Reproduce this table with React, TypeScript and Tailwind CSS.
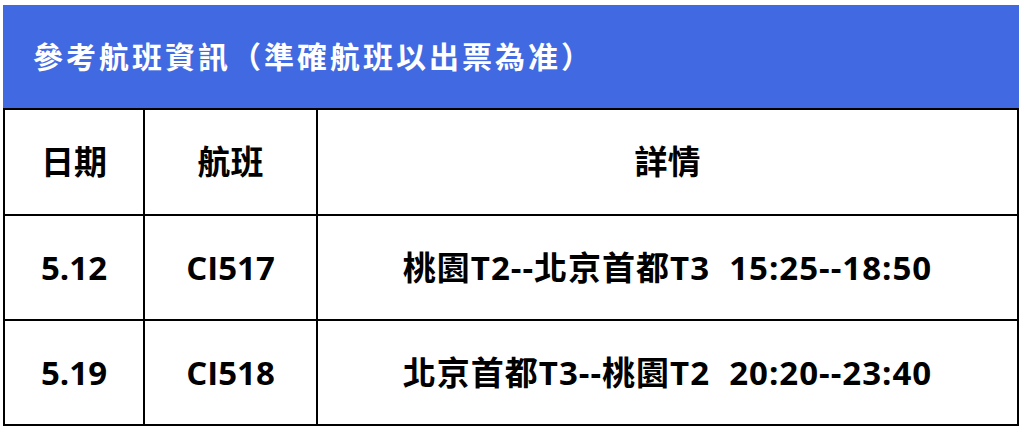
const rows = [
  { date: "5.12", flight: "CI517", detail: "桃園T2--北京首都T3\u00a0\u00a015:25--18:50" },
  { date: "5.19", flight: "CI518", detail: "北京首都T3--桃園T2\u00a0\u00a020:20--23:40" },
];

const font = { fontFamily: '"Open Sans", "Noto Sans CJK TC", sans-serif' };

export default function App() {
  return (
    <div className="w-[1024px] h-[431px] bg-white pt-[5px] pl-[3px]" style={font}>
      <div className="w-[1016px]">
        <div className="h-[103px] bg-[#4169e1] flex items-center pl-[30px]">
          <span className="text-white font-bold text-[30px] tracking-[3px]">
            參考航班資訊（準確航班以出票為准）
          </span>
        </div>
        <table className="w-full border-collapse text-black font-bold text-[33px]">
          <colgroup>
            <col className="w-[140px]" />
            <col className="w-[173px]" />
            <col />
          </colgroup>
          <tbody>
            <tr className="h-[106px]">
              <td className="border-2 border-black text-center">日期</td>
              <td className="border-2 border-black text-center">航班</td>
              <td className="border-2 border-black text-center">詳情</td>
            </tr>
            {rows.map((r) => (
              <tr key={r.date} className="h-[105px]">
                <td className="border-2 border-black text-center">{r.date}</td>
                <td className="border-2 border-black text-center">{r.flight}</td>
                <td className="border-2 border-black text-center tracking-[1px]">{r.detail}</td>
              </tr>
            ))}
          </tbody>
        </table>
      </div>
    </div>
  );
}
